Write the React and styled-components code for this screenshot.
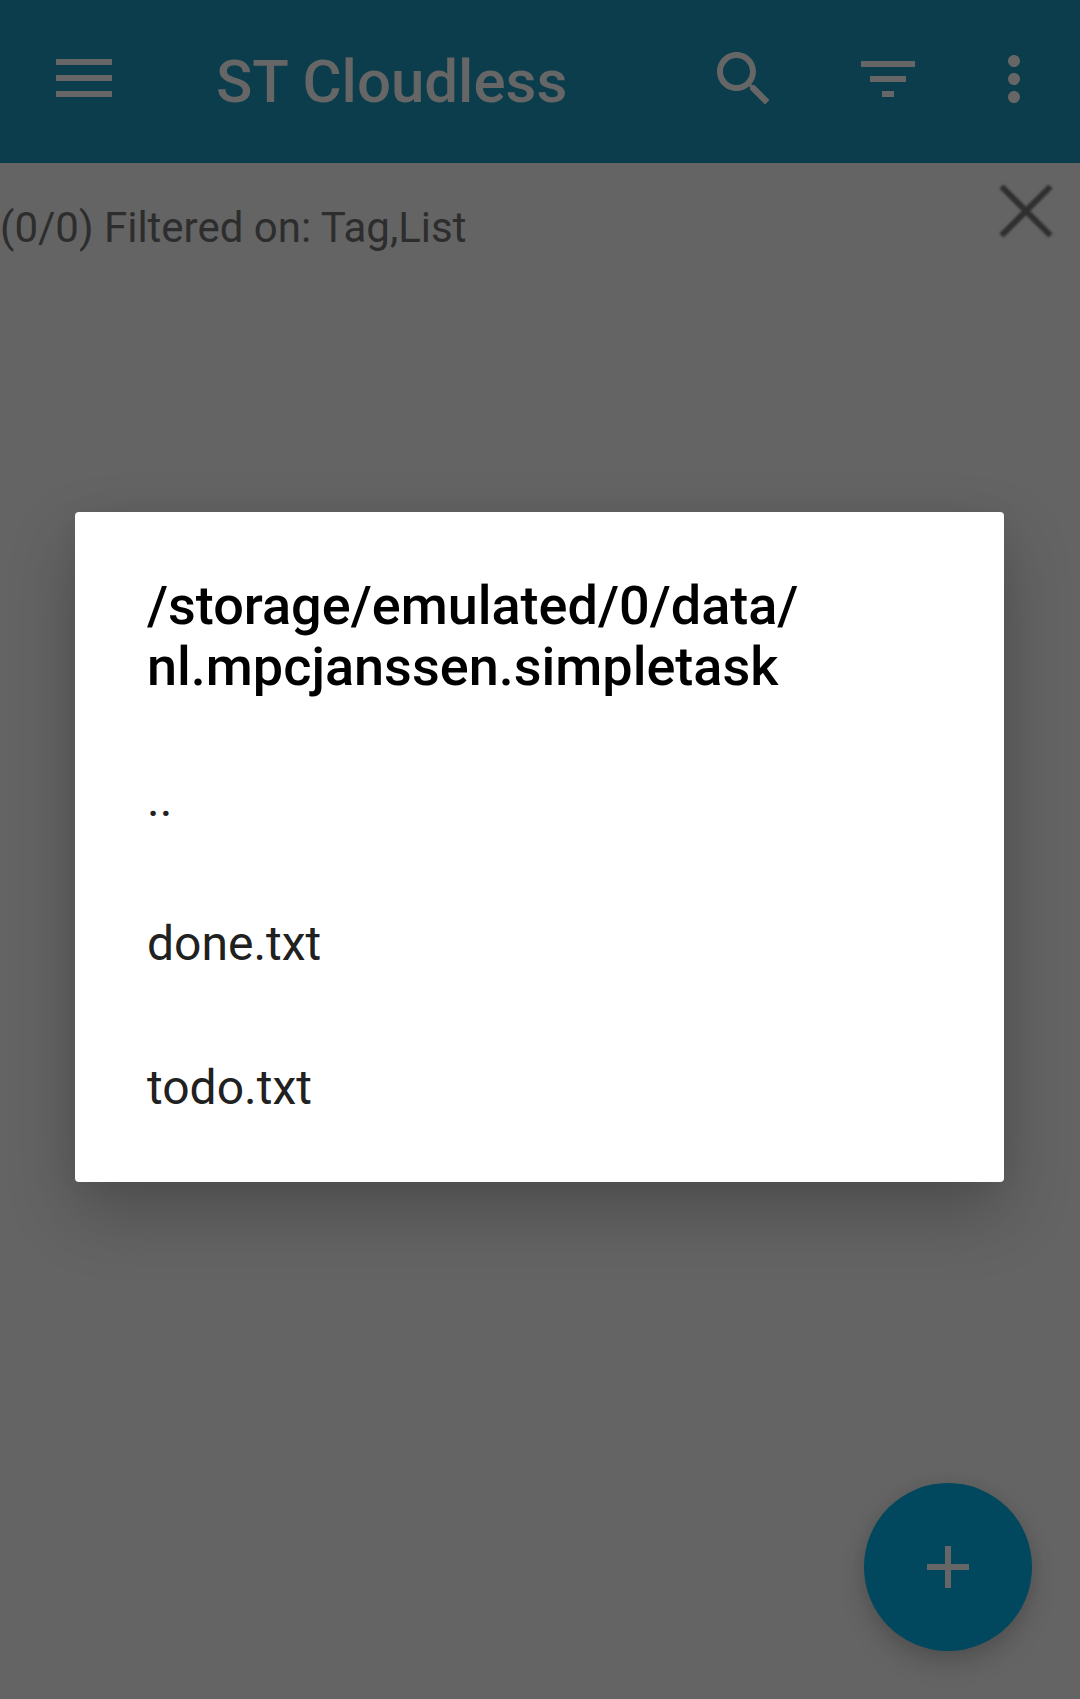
import React from 'react';
import styled, { createGlobalStyle } from 'styled-components';

const GlobalStyle = createGlobalStyle`
  *, *::before, *::after { box-sizing: border-box; }
  body { margin: 0; background: #646464; font-family: Roboto, "Noto Sans", sans-serif; }
  button { border: 0; padding: 0; background: none; font: inherit; color: inherit; display: block; }
  svg { display: block; }
`;

const Screen = styled.div`
  position: relative;
  display: flex;
  flex-direction: column;
  width: 1080px;
  height: 1699px;
  background: #646464;
  overflow: hidden;
`;

const AppBar = styled.header`
  display: flex;
  align-items: flex-start;
  height: 163px;
  padding: 43px 30px 0 48px;
  background: #0c3d4c;
  color: #666666;
`;

const IconButton = styled.button`
  width: 72px;
  height: 72px;
  margin-left: ${(p) => p.$gap || 0}px;
`;

const AppTitle = styled.h1`
  flex: 1;
  margin: 0 0 0 96px;
  padding-top: 4px;
  font-size: 60px;
  line-height: 70px;
  font-weight: 500;
  white-space: nowrap;
`;

const FilterBar = styled.div`
  display: flex;
  justify-content: space-between;
  align-items: flex-start;
  padding-right: 18px;
  color: #2d2d2d;
`;

const FilterText = styled.span`
  padding-top: 40px;
  font-size: 42px;
  line-height: 49px;
`;

const ClearButton = styled(IconButton)`
  margin-top: 12px;
  color: #2f2f2f;
  filter: blur(0.9px);
`;

const FabArea = styled.div`
  display: flex;
  flex: 1;
  align-items: flex-end;
  justify-content: flex-end;
  padding: 0 48px 48px 0;
`;

const Fab = styled.button`
  display: flex;
  align-items: center;
  justify-content: center;
  width: 168px;
  height: 168px;
  border-radius: 50%;
  background: #01485f;
  color: #666666;
  box-shadow: 0 12px 26px rgba(0, 0, 0, 0.18), 0 0 14px rgba(0, 0, 0, 0.06);
`;

const DialogLayer = styled.div`
  position: absolute;
  inset: 0;
  display: flex;
  align-items: flex-start;
  padding: 512px 76px 0 75px;
`;

const Dialog = styled.section`
  flex: 1;
  height: 670px;
  padding: 63px 72px 0;
  border-radius: 4px;
  background: #ffffff;
  box-shadow: 0 30px 68px rgba(0, 0, 0, 0.24), 0 0 26px rgba(0, 0, 0, 0.04);
`;

const DialogTitle = styled.h2`
  margin: 0;
  font-size: 54px;
  line-height: 61px;
  font-weight: 500;
  color: #000000;
`;

const FileList = styled.ul`
  margin: 30px 0 0;
  padding: 0;
  list-style: none;
`;

const FileRow = styled.li`
  display: flex;
  align-items: center;
  height: 144px;
  font-size: 48px;
  color: #212121;
`;

const Icon = ({ d, size = 72 }) => (
  <svg width={size} height={size} viewBox="0 0 24 24" fill="currentColor">
    <path d={d} />
  </svg>
);

const searchPath =
  'M15.5 14h-.79l-.28-.27C15.41 12.59 16 11.11 16 9.5 16 5.91 13.09 3 9.5 3S3 5.91 3 9.5 5.91 16 9.5 16c1.61 0 3.09-.59 4.23-1.57l.27.28v.79l5 4.99L20.49 19l-4.99-5zm-6 0C7.01 14 5 11.99 5 9.5S7.01 5 9.5 5 14 7.01 14 9.5 11.99 14 9.5 14z';
const filterPath = 'M10 18h4v-2h-4v2zM3 6v2h18V6H3zm3 7h12v-2H6v2z';
const morePath =
  'M12 8c1.1 0 2-.9 2-2s-.9-2-2-2-2 .9-2 2 .9 2 2 2zm0 2c-1.1 0-2 .9-2 2s.9 2 2 2 2-.9 2-2-.9-2-2-2zm0 6c-1.1 0-2 .9-2 2s.9 2 2 2 2-.9 2-2-.9-2-2-2z';
const addPath = 'M19 13h-6v6h-2v-6H5v-2h6V5h2v6h6v2z';

const MenuIcon = () => (
  <svg width="72" height="72" viewBox="0 0 72 72" fill="currentColor">
    <path d="M8 16h56v6H8zM8 32h56v6H8zM8 48h56v6H8z" />
  </svg>
);

const CloseIcon = () => (
  <svg width="72" height="72" viewBox="0 0 72 72" fill="none" stroke="currentColor" strokeWidth="6">
    <path d="M11.5 11.5L60.5 60.5M60.5 11.5L11.5 60.5" />
  </svg>
);

const files = ['..', 'done.txt', 'todo.txt'];

export default function App() {
  return (
    <Screen>
      <GlobalStyle />
      <AppBar>
        <IconButton aria-label="Menu"><MenuIcon /></IconButton>
        <AppTitle>ST Cloudless</AppTitle>
        <IconButton aria-label="Search"><Icon d={searchPath} /></IconButton>
        <IconButton aria-label="Filter" $gap={72}><Icon d={filterPath} /></IconButton>
        <IconButton aria-label="More" $gap={54}><Icon d={morePath} /></IconButton>
      </AppBar>
      <FilterBar>
        <FilterText>(0/0) Filtered on: Tag,List</FilterText>
        <ClearButton aria-label="Clear filter"><CloseIcon /></ClearButton>
      </FilterBar>
      <FabArea>
        <Fab aria-label="Add"><Icon d={addPath} /></Fab>
      </FabArea>
      <DialogLayer>
        <Dialog role="dialog">
          <DialogTitle>
            /storage/emulated/0/data/<br />nl.mpcjanssen.simpletask
          </DialogTitle>
          <FileList>
            {files.map((name) => <FileRow key={name}>{name}</FileRow>)}
          </FileList>
        </Dialog>
      </DialogLayer>
    </Screen>
  );
}
